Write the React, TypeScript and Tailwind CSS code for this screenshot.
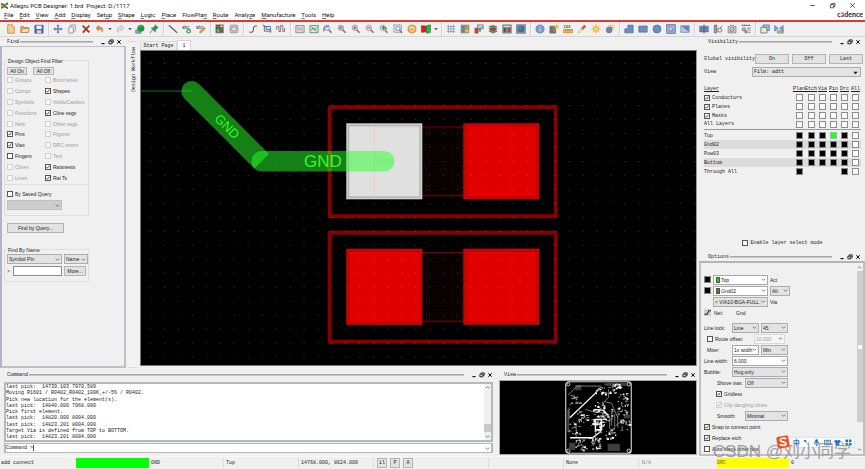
import React from 'react';

const SANS = "font-['Liberation_Sans',sans-serif] text-[5px] leading-[8px]";
const MONO = "font-['Liberation_Mono',monospace] text-[5px] leading-[6px]";

/* ---------- small shared controls ---------- */

function Chevron({ className = '' }: { className?: string }) {
  return (
    <svg viewBox="0 0 6 6" className={`pointer-events-none size-[5px] ${className}`} fill="none" stroke="#555" strokeWidth="0.9">
      <path d="M1 2l2 2 2-2" />
    </svg>
  );
}

function Check({ label, on = false, disabled = false, className = '', mono = false }: { label: string; on?: boolean; disabled?: boolean; className?: string; mono?: boolean }) {
  return (
    <label className={`flex items-center gap-[2px] whitespace-nowrap ${disabled ? 'text-[#9c9c9c]' : 'text-[#1c1c1c]'} ${mono ? MONO : ''} ${className}`}>
      <span className="grid size-[6px] shrink-0 place-items-center">
        <input
          type="checkbox"
          defaultChecked={on}
          disabled={disabled}
          className="col-start-1 row-start-1 size-[6px] appearance-none border border-[#555] bg-white disabled:border-[#d0d0d0] disabled:bg-[#f7f7f7]"
        />
        {on && (
          <svg viewBox="0 0 6 6" className="pointer-events-none col-start-1 row-start-1 size-[6px]" fill="none" stroke={disabled ? '#aaa' : '#222'} strokeWidth="0.8">
            <path d="M1.5 3l1 1.2 2-2.6" />
          </svg>
        )}
      </span>
      {label}
    </label>
  );
}

function Pick({ label, value, className = '', tone = 'bg-[#e3e3e3] border-[#adadad]', disabled = false, dark = false, swatch = '' }: { label: string; value: string; className?: string; tone?: string; disabled?: boolean; dark?: boolean; swatch?: string }) {
  return (
    <span className={`grid h-[10px] shrink-0 grid-cols-1 items-center border ${tone} ${className}`}>
      <select
        aria-label={label}
        disabled={disabled}
        className={`col-start-1 row-start-1 h-[8px] w-full min-w-0 appearance-none overflow-hidden bg-transparent p-0 pr-[5px] text-clip ${swatch ? 'pl-[7px]' : 'pl-[1px]'} ${disabled ? 'text-[#999]' : 'text-[#1c1c1c]'}`}
      >
        <option>{value}</option>
      </select>
      {swatch && <span className={`col-start-1 row-start-1 ml-[2px] h-[6px] w-[4px] border border-[#4a5a4a] ${swatch}`} />}
      {dark ? (
        <svg viewBox="0 0 6 6" className="pointer-events-none col-start-1 row-start-1 mr-[2px] size-[5px] justify-self-end">
          <path d="M0.5 2h5L3 5z" fill="#111" />
        </svg>
      ) : (
        <Chevron className="col-start-1 row-start-1 mr-[1px] justify-self-end" />
      )}
    </span>
  );
}

function Push({ children, className = 'h-[10px]' }: { children: React.ReactNode; className?: string }) {
  return (
    <button type="button" className={`flex shrink-0 items-center justify-center border border-[#b4b4b4] bg-[#e2e2e2] whitespace-nowrap text-[#1c1c1c] ${className}`}>
      {children}
    </button>
  );
}

function PanelHead({ title, className = '' }: { title: string; className?: string }) {
  return (
    <header className={`flex h-[9px] items-center ${MONO} ${className}`}>
      <h2>{title}</h2>
      <span className="mr-[7px] ml-[1px] h-[2px] flex-1 border-y border-t-[#a8a8a8] border-b-[#c4c4c4]" />
      <span className="flex gap-[2px]">
        <button type="button" aria-label={`Minimise ${title}`} className="size-[6px]">
          <svg viewBox="0 0 6 6" className="size-[6px]"><path d="M1.5 4.6h3" stroke="#111" strokeWidth="1.2" /></svg>
        </button>
        <button type="button" aria-label={`Float ${title}`} className="size-[6px]">
          <svg viewBox="0 0 6 6" className="size-[6px]" fill="none" stroke="#111" strokeWidth="0.9"><path d="M2.2 2V.9h3v2.4H4M.9 2.2h3v2.6h-3z" /></svg>
        </button>
        <button type="button" aria-label={`Close ${title}`} className="size-[6px]">
          <svg viewBox="0 0 6 6" className="size-[6px]" stroke="#111" strokeWidth="1"><path d="M1.3 1.2l3.4 3.6M4.7 1.2L1.3 4.8" /></svg>
        </button>
      </span>
    </header>
  );
}

/* ---------- toolbar ---------- */

const Lens = ({ inner }: { inner?: React.ReactNode }) => (
  <>
    <path d="M6.8 7l3.4 3.4" stroke="#9a6a3c" strokeWidth="1.8" />
    <circle cx="4.6" cy="4.6" r="3.2" fill="#dfe3ec" stroke="#8d93a3" strokeWidth="1" />
    {inner}
  </>
);

const ICONS: Record<string, React.ReactNode> = {
  New: (<><path d="M2 1h5.5L10 3.6V11H2z" fill="#f6cf85" stroke="#a77a30" strokeWidth=".8" /><path d="M7.5 1v2.6H10" fill="#fff3d6" stroke="#a77a30" strokeWidth=".6" /></>),
  Open: (<><path d="M1 3h3.5l1 1.2H10V10H1z" fill="#e9b765" stroke="#8f6a2d" strokeWidth=".7" /><path d="M1 10l2-4.4h8.4L9.8 10z" fill="#fbe1aa" stroke="#8f6a2d" strokeWidth=".7" /></>),
  Save: (<><path d="M1 1.5h10v9.5H1z" fill="#4c6ea6" stroke="#35507f" strokeWidth=".7" /><path d="M2.8 2h6.4v4H2.8z" fill="#eef3fb" /><path d="M3.4 7.6h5.2V11H3.4z" fill="#d4dcea" /></>),
  Move: (<path d="M6 .3L8 2.8H6.8v2.4h2.4V4L11.7 6 9.2 8V6.8H6.8v2.4H8L6 11.7 4 9.2h1.2V6.8H2.8V8L.3 6l2.5-2v1.2h2.4V2.8H4z" fill="#5c81a8" />),
  Copy: (<g fill="#f4f4f4" stroke="#868686" strokeWidth=".9"><path d="M4.5 1.2h5.4v7H4.5z" /><path d="M2.2 3.6h5.4v7.2H2.2z" /></g>),
  Delete: (<path d="M2 2l8 8M10 1.8L2.2 10.4" stroke="#9b3a14" strokeWidth="2.2" />),
  Undo: (<path d="M1.2 4.8L4.6 1.6v2c4 0 5.8 1.8 4 6.4-.2-3-1.4-3.6-4-3.6v2z" fill="#e5882d" stroke="#a95a12" strokeWidth=".4" />),
  Redo: (<path d="M10.8 4.8L7.4 1.6v2c-4 0-5.8 1.8-4 6.4.2-3 1.4-3.6 4-3.6v2z" fill="#e2e2e2" stroke="#a9a9a9" strokeWidth=".7" />),
  Status: (<><path d="M.8 7h6.5v4.2H.8z" fill="#9aa2ad" stroke="#5c6470" strokeWidth=".6" /><circle cx="7" cy="5" r="4.2" fill="#1f9440" /><path d="M4.4 4.2c1-2 3-2.4 4-1.7" stroke="#7fd690" strokeWidth=".9" fill="none" /></>),
  Pin: (<><path d="M1 11l3.6-4" stroke="#666" strokeWidth="1" /><path d="M7.4.8l3.8 3.8-1.3.3-2 2.2-.3 2.6L2.6 4.8l2.6-.4L7 2.3z" fill="#2f9440" stroke="#17662a" strokeWidth=".5" /></>),
  'Add Line': (<path d="M1 1.4l10 9" stroke="#4d5f86" strokeWidth="1.5" />),
  'Add Text': (<><text x="0" y="5.4" fontSize="5.6" fontFamily="Liberation Sans" fill="#333">abc</text><circle cx="8" cy="8.6" r="2.8" fill="#3fa048" /><path d="M6.4 8.6h3.2M8 7v3.2" stroke="#fff" strokeWidth=".9" /></>),
  'Edit Text': (<><text x="0" y="5.4" fontSize="5.6" fontFamily="Liberation Sans" fill="#333">abc</text><path d="M4.4 10.8l.6-2.4L9.6 4l1.8 1.6L6.8 10z" fill="#eaa653" stroke="#94601f" strokeWidth=".6" /></>),
  Place: (<><path d="M1 1h9v9.6H1z" fill="#3d6f49" stroke="#6b6b6b" strokeWidth=".7" /><path d="M2.4 2h2.4v2.2H2.4zM6.6 5h2.6v3H6.6z" fill="#e04040" /><path d="M2.2 6.2h3v3.6h-3z" fill="#4ad152" /><path d="M6.6 1.8h2.6v2H6.6z" fill="#e9e9e9" /></>),
  Component: (<><rect x="1.4" y="1.4" width="9.2" height="9.2" rx="1.2" fill="#c5c9d1" stroke="#868c97" strokeWidth=".9" /><path d="M3.6 4h4.8v4.2H3.6z" fill="#efefef" stroke="#b55" strokeWidth=".7" /></>),
  'Add Connect': (<><path d="M2.2 10h2.2c3 0 1-7.4 4-7.4h2" stroke="#333" strokeWidth="1.2" fill="none" /><circle cx="2.2" cy="10" r="1.3" fill="#e2b82b" /><circle cx="10" cy="2.6" r="1.3" fill="#e2b82b" /></>),
  Slide: (<path d="M.8 1.6h2v7h8.4M3 3h7v7.6M5 3v3.4h5" stroke="#5a6d9e" strokeWidth="1.2" fill="none" />),
  'Delay Tune': (<path d="M.8 7V3h2.8v6h2V1.6h2.6V9h2V5.6h1.2" stroke="#84706c" strokeWidth="1.1" fill="none" />),
  'Unrats All': (<><path d="M1 1.8h10v8.6H1z" fill="#d6d6da" stroke="#7c7c86" strokeWidth=".9" /><path d="M2.6 8L5 4.4l2 2.4 2.6-3M2.6 4l6.6 4.4" stroke="#c98080" strokeWidth=".7" fill="none" /></>),
  'Rats All': (<><path d="M1 1.8h10v8.6H1z" fill="#d9e8da" stroke="#597a60" strokeWidth=".9" /><path d="M2.6 8L5 4.4l2 2.4 2.6-3M2.6 4l6.6 4.4" stroke="#24944a" strokeWidth=".9" fill="none" /></>),
  'Zoom Points': <Lens inner={<path d="M1 9V5l6-3" stroke="#4778b8" strokeWidth="1.2" fill="none" />} />,
  'Zoom Fit': <Lens inner={<path d="M2.4 2.6h4.4v4H2.4z" fill="#c08f97" />} />,
  'Zoom In': <Lens inner={<path d="M2.8 4.6h3.6M4.6 2.8v3.6" stroke="#c63535" strokeWidth="1.1" />} />,
  'Zoom Out': <Lens inner={<path d="M2.8 4.6h3.6" stroke="#c63535" strokeWidth="1.1" />} />,
  'Zoom Previous': <Lens inner={<path d="M3 4.6L6 1.8v1.8c2.4 0 4 1 4.4 3.4C9 5.6 8 5.4 6 5.6v1.6z" fill="#239a3e" />} />,
  'Zoom Selection': (<><path d="M1 1h9v9H1z" fill="#d3dfe9" stroke="#5a7896" strokeWidth=".9" strokeDasharray="1.4 .7" /><circle cx="6" cy="5.4" r="2.4" fill="#f4f8fb" stroke="#5d7080" strokeWidth=".8" /><path d="M7.8 7.4l3 3.4" stroke="#8b6a49" strokeWidth="1.4" /></>),
  Refresh: (<><circle cx="6" cy="6" r="4.9" fill="#efa648" stroke="#b8792b" strokeWidth=".6" /><path d="M4 4.6a2.6 2.6 0 1 1-.2 2.8M3.6 3v2.2h2.2" stroke="#fff" strokeWidth="1" fill="none" /></>),
  'Flip Board': (<><path d="M.4 2.2h3.4a3.8 3.8 0 0 1 0 7.6H.4z" fill="#d52222" stroke="#8a1212" strokeWidth=".6" /><path d="M6.4 2l5-1v9.2l-5 1z" fill="#2bb53b" stroke="#186e24" strokeWidth=".6" /></>),
  Grid: (<path d="M1 3h10M1 6h10M1 9h10M3 1v10M6 1v10M9 1v10" stroke="#8196b8" strokeWidth=".9" />),
  Colors: (<><path d="M.8.8h10.4v10.4H.8z" fill="#8b929c" /><path d="M2 2h3.4v3.4H2z" fill="#5b7fb0" /><path d="M6.6 2H10v3.4H6.6z" fill="#e58b33" /><path d="M2 6.6h3.4V10H2z" fill="#4d9a58" /><path d="M6.6 6.6H10V10H6.6z" fill="#e7c436" /></>),
  Shadow: (<><path d="M4 1h7.2v5H4z" fill="#a7adb5" stroke="#666" strokeWidth=".6" /><path d="M1 5h4v6H1z" fill="#d94444" stroke="#555" strokeWidth=".6" /><path d="M5.4 5.4h3V9h-3z" fill="#3fae4b" /><path d="M5.4 3.6L9.6 2" stroke="#fff" strokeWidth=".9" /></>),
  Layers: (<g strokeWidth=".5" stroke="#4c4038"><path d="M1 8.6l5-2 5 2-5 2.4z" fill="#98815b" /><path d="M1 6l5-2 5 2-5 2.4z" fill="#c03a3a" /><path d="M1 3.4l5-2 5 2L6 5.8z" fill="#4a9c50" /></g>),
  'Cross Section': (<><path d="M.8 1h10.4v10H.8z" fill="#8b949f" stroke="#596067" strokeWidth=".6" /><path d="M2 4.6h3v5H2z" fill="#3d6c45" /><path d="M7 4.6h3v5H7z" fill="#c13a3a" /><path d="M2 2.2h8v1.2H2z" fill="#e6e6e6" /></>),
  'Canvas 3D': (<><path d="M.6.8h10.8v10.4H.6z" fill="#8d949c" stroke="#5f656b" strokeWidth=".6" /><circle cx="6" cy="6" r="4" fill="#2d6ca5" /><path d="M4 4c1-1.4 2-1 2.4 0S5 6 5 8C3.6 7 3 5.4 4 4zM7.4 5.4l2 .8-1 2z" fill="#52b15a" /></>),
  Info: (<><circle cx="6" cy="6" r="4.9" fill="#7b9cd0" stroke="#5673a3" strokeWidth=".7" /><path d="M6 5.2V9M6 2.8V4" stroke="#f3e37a" strokeWidth="1.3" /></>),
  Property: (<><path d="M1 2.6h7V11H1z" fill="#767d6f" stroke="#555" strokeWidth=".6" /><path d="M2.4 4.6h1.8V9H2.4z" fill="#d64848" /><path d="M5 4.6h1.8V9H5z" fill="#4fae56" /><circle cx="9.2" cy="3.2" r="2.4" fill="#efc13c" /></>),
  Measure: (<><text x=".6" y="5" fontSize="5" fontWeight="bold" fontFamily="Liberation Sans" fill="#444">123</text><path d="M.6 6.6h11v4H.6z" fill="#f0b54c" stroke="#ac7420" strokeWidth=".6" /><path d="M3 6.6v1.8M5.2 6.6v1.8M7.4 6.6v1.8M9.6 6.6v1.8" stroke="#7a5012" strokeWidth=".5" /></>),
  Highlight: (<><path d="M5 5.4L8.8 1.2l2 1.8-4 4z" fill="#c5593b" stroke="#7c3420" strokeWidth=".4" /><path d="M5 5.2l1.8 1.9C5 9.4 3 10.4 1 11c.6-2.4 2-4.4 4-5.8z" fill="#f6ec9b" stroke="#ac9b3c" strokeWidth=".4" /></>),
  Dehighlight: (<><path d="M6 .4v11.2M.4 6h11.2M2 2l8 8M10 2l-8 8" stroke="#eda92f" strokeWidth="1.2" /><circle cx="6" cy="6" r="2.9" fill="#fbdb5e" stroke="#d69426" strokeWidth=".7" /></>),
  'Assign Color': (<><path d="M7 .4v8M3 4.4h8.6M4 1.4l6 6M10 1.4l-6 6" stroke="#eda92f" strokeWidth="1.1" /><circle cx="7" cy="4.6" r="2.4" fill="#f6c94c" /><circle cx="5" cy="7.2" r="3.6" fill="#7386a9" stroke="#4d5d7c" strokeWidth=".5" /></>),
  'Shape Add': (<path d="M1 10.6V5.8h3.6V1.4H11v9.2z" fill="#6e8ec2" stroke="#4c679a" strokeWidth=".8" />),
  'Shape Rect': (<path d="M1 2.4h10v7.4H1z" fill="#6e8ec2" stroke="#4c679a" strokeWidth=".8" />),
  'Shape Circle': (<circle cx="6" cy="6" r="4.8" fill="#6e8ec2" stroke="#4c679a" strokeWidth=".8" />),
  'Shape Select': (<><path d="M.8.8h10.4v10.4H.8z" fill="#9fb6dc" stroke="#47619a" strokeWidth=".9" /><path d="M4 2.4v6.2l1.6-1.4 1 2.2 1-.5-1-2.1h2z" fill="#fff" stroke="#333" strokeWidth=".5" /></>),
  'Shape Void': (<><path d="M1 2h10v8H1z" fill="#b9c9e2" stroke="#5d78a8" strokeWidth=".8" /><path d="M1.6 2.6h9v6.8z" fill="#5f7fb6" /></>),
  'Flip Design': (<><path d="M.8 2.6h4.4v7H.8zM6.8 2.6h4.4v7H6.8z" fill="#6885b3" stroke="#48618c" strokeWidth=".6" /><path d="M6 .6v11" stroke="#222" strokeWidth=".9" /></>),
  Testprep: (<><path d="M1.6 1.4h3v9.2h-3z" fill="#9fa5ae" stroke="#555" strokeWidth=".8" /><circle cx="8.2" cy="7.4" r="2.4" fill="none" stroke="#666" strokeWidth="1" /><path d="M8.8 5L11 2" stroke="#666" strokeWidth="1" /></>),
  Artwork: (<><path d="M1.4 3h2l1-1.4h3.4l1 1.4h2v7.6H1.4z" fill="#c9c9c9" stroke="#757575" strokeWidth=".8" /><circle cx="6" cy="6.6" r="2.2" fill="#fff" stroke="#555" strokeWidth=".8" /><path d="M4 9l4-4.6" stroke="#666" strokeWidth=".7" /></>),
  Drill: (<><path d="M1 1.6h10" stroke="#555" strokeWidth="1.3" strokeDasharray="1.6 .6" /><circle cx="3.4" cy="6.4" r="2.2" fill="#aab4ba" stroke="#666" strokeWidth=".6" /><circle cx="6" cy="9.4" r="1.6" fill="#8fa58f" stroke="#555" strokeWidth=".5" /><path d="M7.4 5h3.8M8.6 7.4h2.6M8.6 10h2.6" stroke="#444" strokeWidth=".8" /></>),
  Report: (<><path d="M3.6 1.2h7.6v6.6H3.6z" fill="#a7bfe6" stroke="#4169a8" strokeWidth=".9" /><path d="M1 4h7.4v6.8H1z" fill="#f2e9b8" stroke="#4169a8" strokeWidth=".9" /></>),
  Compare: (<><path d="M.8 1.8l4.4 3.4L.8 8.6zM11 1.8L6.6 5.2 11 8.6z" fill="#86a4d1" stroke="#4e6c9c" strokeWidth=".7" /><path d="M4 8h7.2v3H4z" fill="#9cc08c" stroke="#5a7e4c" strokeWidth=".6" /></>),
};

const TOOL_GROUPS: string[][] = [
  ['New', 'Open', 'Save'],
  ['Move', 'Copy', 'Delete', 'Undo', 'v', 'Redo', 'v', 'Status', 'Pin'],
  ['Add Line', 'Add Text', 'Edit Text'],
  ['Place', 'Component'],
  ['Add Connect', 'Slide', 'Delay Tune'],
  ['Unrats All', 'Rats All', 'Zoom Points', 'Zoom Fit', 'Zoom In', 'Zoom Out', 'Zoom Previous', 'Zoom Selection', 'Refresh', 'Flip Board', 'v'],
  ['Grid', 'Colors', 'Shadow', 'Layers', 'Cross Section', 'Canvas 3D'],
  ['Info', 'Property', 'Measure', 'Highlight', 'Dehighlight', 'Assign Color'],
  ['Shape Add', 'Shape Rect', 'Shape Circle', 'Shape Select', 'Shape Void'],
  ['Flip Design', 'Testprep', 'Artwork', 'Drill'],
  ['Report', 'Compare'],
];

function Toolbar() {
  return (
    <div role="toolbar" aria-label="Main tools" className="flex h-[15px] shrink-0 items-center border-b border-[#d6d6d6] bg-[#f0f0f0] pl-[4px]">
      {TOOL_GROUPS.map((group, g) => (
        <React.Fragment key={g}>
          {g > 0 && <span className="flex h-[14px] w-[5px] justify-center"><span className="w-[2px] border-x border-l-[#d2d2d2] border-r-[#fafafa]" /></span>}
          {group.map((name, i) =>
            name === 'v' ? (
              <button key={i} type="button" aria-label={`${group[i - 1]} options`} className="flex h-[12px] w-[6px] items-center justify-center">
                <svg viewBox="0 0 6 6" className="size-[4px]"><path d="M.5 2h5L3 4.5z" fill="#222" /></svg>
              </button>
            ) : (
              <button key={i} type="button" aria-label={name} className="flex h-[12px] w-[14px] items-center justify-center">
                <svg viewBox="0 0 12 12" className="size-[10px]" fill="none">{ICONS[name]}</svg>
              </button>
            ),
          )}
        </React.Fragment>
      ))}
    </div>
  );
}

const MENUS: [string, string, string][] = [
  ['', 'F', 'ile'], ['', 'E', 'dit'], ['', 'V', 'iew'], ['', 'A', 'dd'], ['', 'D', 'isplay'], ['Set', 'u', 'p'], ['', 'S', 'hape'], ['', 'L', 'ogic'],
  ['', 'P', 'lace'], ['FlowPla', 'n', ''], ['', 'R', 'oute'], ['Analy', 'z', 'e'], ['', 'M', 'anufacture'], ['', 'T', 'ools'], ['', 'H', 'elp'],
];

function TitleAndMenu() {
  return (
    <div className="flex h-[20px] shrink-0 justify-between bg-white font-['Roboto',sans-serif] text-[#111]">
      <div className="flex flex-col">
        <h1 className="flex h-[11px] items-center gap-[2px] pl-[1px] text-[6px] leading-[8px] whitespace-pre">
          <svg viewBox="0 0 8 8" className="size-[7px]">
            <path d="M0 1l4 1.6L8 0v3L5 4.4 8 7v1L4 6 0 8V5l2.6-1L0 2.6z" fill="#2fa136" />
            <path d="M0 1l3 1.4v1L0 4zM5 4.6L8 6v2L4 6z" fill="#d22e25" />
          </svg>
          {'Allegro PCB Designer: 1.brd  Project: D:/1117'}
        </h1>
        <nav className="flex h-[8px] items-center gap-[6px] pl-[4px] text-[6px] leading-[8px]">
          {MENUS.map(([a, u, b]) => (
            <button key={a + u + b} type="button">{a}<span className="underline decoration-[#777]">{u}</span>{b}</button>
          ))}
        </nav>
      </div>
      <div className="flex flex-col items-end">
        <div className="flex h-[10px] items-center gap-[13px] pr-[9px]">
          <button type="button" aria-label="Minimise"><svg viewBox="0 0 8 8" className="size-[7px]"><path d="M1.5 4h5" stroke="#333" strokeWidth=".9" /></svg></button>
          <button type="button" aria-label="Restore"><svg viewBox="0 0 8 8" className="size-[7px]" fill="none" stroke="#333" strokeWidth=".9"><path d="M3 3V1.6h3.8V5H5.4M1.6 3h3.8v3.6H1.6z" /></svg></button>
          <button type="button" aria-label="Close"><svg viewBox="0 0 8 8" className="size-[7px]" stroke="#333" strokeWidth=".9"><path d="M1.4 1.4l5.2 5.2M6.6 1.4L1.4 6.6" /></svg></button>
        </div>
        <span className="pr-[2px] font-['Lato',sans-serif] text-[7px] leading-[8px] font-bold text-[#222]">c<span className="text-[#b03030]">ā</span>dence</span>
      </div>
    </div>
  );
}

/* ---------- find panel ---------- */

const FILTERS: [string, boolean, boolean][] = [
  ['Groups', false, true], ['Bond wires', false, true],
  ['Comps', false, true], ['Shapes', true, false],
  ['Symbols', false, true], ['Voids/Cavities', false, true],
  ['Functions', false, true], ['Cline segs', true, false],
  ['Nets', false, true], ['Other segs', false, true],
  ['Pins', true, false], ['Figures', false, true],
  ['Vias', true, false], ['DRC errors', false, true],
  ['Fingers', false, false], ['Text', false, true],
  ['Clines', false, true], ['Ratsnests', true, false],
  ['Lines', false, true], ['Rat Ts', true, false],
];

function FindPanel() {
  return (
    <section className="flex w-[126px] shrink-0 flex-col">
      <PanelHead title="Find" className="pr-[4px] pl-[7px]" />
      <div className={`flex flex-1 flex-col border-2 border-t border-[#bfbfc6] border-l-[#b3b3c6] px-[2px] pt-[13px] ${SANS}`}>
        <div className="flex h-[156px] w-[85px] flex-col border border-[#dedede]">
          <h3 className="-mt-[4px] mb-[2px] ml-[2px] flex h-[8px] w-fit items-center bg-[#f0f0f0] px-[1px]">Design Object Find Filter</h3>
          <div className="flex gap-[6px] pl-[2px]">
            <Push className="h-[8px] w-[20px]">All On</Push>
            <Push className="h-[8px] w-[21px]">All Off</Push>
          </div>
          <div className="grid h-[108px] grid-cols-[38px_1fr] grid-rows-10 pl-[2px]">
            {FILTERS.map(([name, on, off]) => <Check key={name} label={name} on={on} disabled={off} />)}
          </div>
          <div className="mt-[1px] flex flex-col gap-[2px] border-t border-[#dedede] pt-[5px] pl-[2px]">
            <Check label="By Saved Query" />
            <Pick label="Saved query" value="" disabled className="w-[55px]" tone="bg-[#cdcdcd] border-[#c0c0c0]" />
          </div>
        </div>
        <Push className="mt-[7px] ml-[3px] h-[10px] w-[57px]">Find by Query...</Push>
        <div className="mt-[16px] flex h-[33px] w-[85px] flex-col border border-[#dedede] pl-[2px]">
          <h3 className="-mt-[4px] flex h-[8px] w-fit items-center bg-[#f0f0f0] px-[1px]">Find By Name</h3>
          <div className="flex gap-[2px]">
            <Pick label="Object type" value="Symbol Pin" className="w-[55px]" />
            <Pick label="Match by" value="Name" className="w-[24px]" />
          </div>
          <div className="mt-[2px] flex items-center gap-[2px]">
            <span className="w-[4px]">&gt;</span>
            <input aria-label="Name to find" className="h-[10px] w-[49px] border border-[#8a8a8a] bg-white px-[1px]" />
            <Push className="h-[10px] w-[22px]">More...</Push>
          </div>
        </div>
      </div>
    </section>
  );
}

/* ---------- board canvas ---------- */

function RedPad({ x, y, seam }: { x: number; y: number; seam: number }) {
  return (
    <g>
      <rect x={x} y={y} width="76" height="76" fill="#d80000" />
      <rect x={x + 1.5} y={y + 1.5} width="73" height="73" fill="#b80000" />
      <rect x={x + 3} y={y + 3} width="70" height="70" fill="#e00000" />
      <path d={`M${x + 3} ${y + 3.5}H${x + seam}V${y + 72.5}H${x + 3}`} fill="none" stroke="#f40000" strokeWidth="0.7" />
    </g>
  );
}

function Board() {
  return (
    <svg viewBox="141 51 555 314" preserveAspectRatio="xMinYMin slice" className="h-full w-full bg-black" role="img" aria-label="Board layout">
      <defs>
        <pattern id="dots" x="150" y="63" width="13.95" height="13.98" patternUnits="userSpaceOnUse">
          <rect width="1.2" height="1" fill="#fff" fillOpacity="0.2" />
        </pattern>
        <pattern id="hatch" width="3" height="3" patternUnits="userSpaceOnUse">
          <rect width="1" height="1" fill="#2c0000" />
          <rect x="1.5" y="1.5" width="1" height="1" fill="#220000" />
        </pattern>
      </defs>
      {[107.3, 232.8].map((y) => (
        <g key={y}>
          <rect x="329.7" y={y} width="226" height="109" fill="none" stroke="#850000" strokeWidth="4" strokeLinejoin="round" />
          <rect x="422" y={y + 19.7} width="42" height="69" fill="url(#hatch)" />
          <path d={`M422 ${y + 19.7}h42M422 ${y + 88.5}h42`} stroke="#850000" strokeWidth="1" />
          <RedPad x={463.3} y={y + 16} seam={48} />
        </g>
      ))}
      <RedPad x={346.3} y={248.9} seam={28} />
      <rect x="346.3" y="123.3" width="76" height="76" fill="#d2d4d2" />
      <rect x="347.8" y="124.8" width="73" height="73" fill="#b4b6b4" />
      <rect x="349.3" y="126.3" width="70" height="70" fill="#e0e0e0" />
      <path d="M374.3 127v69M374 127.2h45" stroke="#f0c4c4" strokeWidth="0.7" />
      <rect x="141" y="51" width="555" height="314" fill="url(#dots)" />
      <path d="M141 91h51" stroke="#117011" strokeWidth="1.2" />
      <path d="M199 84L269 154L254.4 168.6L184.4 98.6A10.3 10.3 0 0 1 199 84z" fill="#2aff2a" fillOpacity="0.5" />
      <path d="M261.7 161.3H384.3" stroke="#2aff2a" strokeOpacity="0.5" strokeWidth="20.6" strokeLinecap="round" />
      <g fill="#2aff2a" fontFamily="Liberation Sans" textAnchor="middle">
        <text x="323" y="167" fontSize="17">GND</text>
        <text x="227.3" y="131" fontSize="13" transform="rotate(45 227.3 126.3)">GND</text>
        <text x="383" y="164.5" fontSize="9" fillOpacity="0.25">GND</text>
      </g>
    </svg>
  );
}

function Workspace() {
  return (
    <section className="flex min-w-0 flex-1 flex-col pr-[2px] pb-[2px]">
      <div className={`flex h-[13px] items-end ${MONO}`}>
        <button type="button" className="h-[9px] w-[37px] border border-b-0 border-[#dcdcdc] bg-[#ececec]">Start Page</button>
        <button type="button" className="h-[10px] w-[14px] border border-b-0 border-[#d4d4d4] bg-white">1</button>
      </div>
      <div className="min-h-0 flex-1 border border-t-[#777] border-r-[#9a9a9a] border-b-[#777] border-l-[#777]">
        <Board />
      </div>
    </section>
  );
}

/* ---------- command and view ---------- */

const LOG = [
  'last pick:  14739.103 7970.589',
  'Moving R1601 / R0402_R0402_100K_+/-5% / R0402.',
  'Pick new location for the element(s).',
  'last pick:  14840.000 7968.000',
  'Pick first element.',
  'last pick:  14820.000 8004.000',
  'last pick:  14823.201 8004.000',
  'Target Via is defined from TOP to BOTTOM.',
  'last pick:  14823.201 8004.000',
];

function CommandPanel() {
  return (
    <section className="flex w-[493px] shrink flex-col pl-[4px]">
      <PanelHead title="Command" className="mt-[2px] pl-[3px]" />
      <div className="mt-[3px] flex h-[60px] border-2 border-[#b5b9b9] bg-white">
        <div className={`flex flex-1 flex-col justify-between overflow-hidden whitespace-pre text-[#222] ${MONO}`}>
          {LOG.map((line, i) => <p key={i}>{line}</p>)}
        </div>
        <div className="flex w-[7px] flex-col items-center bg-[#f0f0f0] py-[1px]">
          <Chevron className="rotate-180" />
          <span className="mt-auto h-[8px] w-full bg-[#c8c8c8]" />
          <Chevron className="mt-[2px]" />
        </div>
      </div>
      <div className="mt-[1px] flex h-[10px] items-center border-2 border-y border-[#b5b9b9] bg-white">
        <label htmlFor="cmd" className={`w-[28px] overflow-hidden border-r border-[#555] whitespace-nowrap ${MONO}`}>Command &gt;</label>
        <input id="cmd" className={`h-[8px] min-w-0 flex-1 bg-transparent px-[2px] ${MONO}`} />
        <Chevron className="mr-[1px]" />
      </div>
    </section>
  );
}

/* Deterministic scatter of part outlines used to fill the overview board. */
const PARTS = Array.from({ length: 330 }, (_, i) => {
  const r = (n: number) => { const v = Math.sin(i * 12.9898 + n * 78.233) * 43758.5453; return v - Math.floor(v); };
  const clusters = [[10, 18], [17, 35], [31, 46], [33, 26], [56, 17], [57, 27], [58, 43], [44, 52], [29, 61], [15, 63], [9, 47], [41, 33], [48, 7], [35, 8], [33, 38]];
  const [cx, cy] = clusters[Math.floor(r(1) * clusters.length)];
  return { x: cx + (r(2) - 0.5) * 11, y: cy + (r(3) - 0.5) * 11, w: 0.6 + r(4) * 2, h: 0.5 + r(5) * 1.4, c: r(6) > 0.5 ? '#fff' : '#8f8f8f' };
});

function ViewPanel() {
  return (
    <section className="flex min-w-0 flex-1 flex-col pr-[2px] pl-[6px]">
      <PanelHead title="View" className="mt-[2px] pr-[1px] pl-[5px]" />
      <div className="mt-[1px] flex h-[75px] justify-center border border-[#a9a9a9] bg-black">
        <svg viewBox="0 0 66 72" className="h-[73px] w-[67px]" fill="none" role="img" aria-label="Board overview">
          <rect x=".7" y=".7" width="64.6" height="70.6" rx="3" stroke="#d5d5d5" strokeWidth="1.1" />
          {[[3.2, 3.2], [62.8, 3.2], [3.2, 68.8], [62.8, 68.8]].map(([x, y]) => <circle key={`${x}-${y}`} cx={x} cy={y} r="1.6" stroke="#fff" strokeWidth=".8" />)}
          <path d="M41 2h20v3H41zM58 33h6v4h-6zM4 61h6v7H4zM42 62h12v7H42zM10 4h6v5h-6z" fill="#3e3e3e" />
          <path d="M5 36L30 12l4-5M5 56h22l8-6v-10" stroke="#fff" strokeWidth="1.3" />
          <path d="M3 14l9-9h24M4 26v12M3 50V28M8 40l3 4v12M20 28l10 3h10l4 4v12M38 20l8 2 6 14M26 38h14M43 8v8l-4 4M14 60l8 8M50 44l8-6M46 30v14M49 32v14M52 34v12M30 48v12l-4 4" stroke="#a8a8a8" strokeWidth=".7" />
          {PARTS.map((p, i) => <rect key={i} x={p.x} y={p.y} width={p.w} height={p.h} fill={p.c} />)}
          <path d="M29 28l9 1 4 5M30 38v10h6V38zM50 8l4-3 2 2" stroke="#fff" strokeWidth="1.4" />
        </svg>
      </div>
    </section>
  );
}

/* ---------- visibility ---------- */

const COLS = ['Plan', 'Etch', 'Via', 'Pin', 'Drc', 'All'];
const TOGGLES = ['Conductors', 'Planes', 'Masks', 'All Layers'];
const LAYERS: [string, string][] = [['Top', 'kkkgkw'], ['Gnd02', 'kkkkkw'], ['Pow03', 'kkkkkw'], ['Bottom', 'kkkkkw'], ['Through All', 'k   kw']];
const CELL: Record<string, string> = { k: 'bg-black border-[#8c8c8c]', g: 'bg-[#22ff22] border-[#b0b0b0]', w: 'bg-white border-[#8c8c8c]' };

function Cell({ kind, label }: { kind: string; label: string }) {
  return (
    <td className="p-0 align-middle">
      {kind !== ' ' && <input type="checkbox" aria-label={label} className={`mx-auto block size-[7px] appearance-none border ${CELL[kind]}`} />}
    </td>
  );
}

function VisibilityPanel() {
  return (
    <section className={`flex h-[215px] shrink-0 flex-col ${MONO}`}>
      <PanelHead title="Visibility" className="pr-[4px] pl-[9px]" />
      <div className="flex flex-1 flex-col pr-[4px] pl-[5px]">
        <div className="mt-[8px] flex items-center justify-between">
          <span className="whitespace-nowrap">Global visibility</span>
          <div className="flex gap-[3px]">
            <Push className="h-[10px] w-[34px]">On</Push>
            <Push className="h-[10px] w-[34px]">Off</Push>
            <Push className="h-[10px] w-[34px]">Last</Push>
          </div>
        </div>
        <div className="mt-[3px] flex items-center justify-between">
          <span>View</span>
          <Pick label="View" value="Film: adtt" dark className="w-[109px]" />
        </div>
        <table className="mt-[8px] w-full table-fixed border-collapse">
          <colgroup>
            <col />
            {COLS.map((c, i) => <col key={c} className={i < 2 ? 'w-[12px]' : 'w-[11px]'} />)}
          </colgroup>
          <thead>
            <tr className="h-[8px]">
              <th className="p-0 text-left font-normal underline">Layer</th>
              {COLS.map((c) => <th key={c} className="p-0 text-center font-normal underline">{c}</th>)}
            </tr>
          </thead>
          <tbody>
            {TOGGLES.map((name, i) => (
              <tr key={name} className={`h-[9px] ${i === 3 ? 'border-b border-[#999]' : ''}`}>
                <th className="p-0 text-left font-normal">{i < 3 ? <Check label={name} on mono /> : name}</th>
                {COLS.map((c) => <Cell key={c} kind="w" label={`${name} ${c}`} />)}
              </tr>
            ))}
            <tr className="h-[2px]"><td colSpan={7} className="p-0" /></tr>
            {LAYERS.map(([name, cells], i) => (
              <tr key={name} className={`h-[9px] ${i % 2 ? 'bg-[#dcdcdc]' : ''}`}>
                <th className="p-0 text-left font-normal">{name}</th>
                {COLS.map((c, j) => <Cell key={c} kind={cells[j]} label={`${name} ${c}`} />)}
              </tr>
            ))}
          </tbody>
        </table>
        <Check label="Enable layer select mode" mono className="mt-auto mb-[6px] self-center" />
      </div>
    </section>
  );
}

/* ---------- options ---------- */

function Swatch() {
  return <span className="size-[7px] shrink-0 border-[1px] border-[#888] bg-black" />;
}

function Row({ children, className = '' }: { children: React.ReactNode; className?: string }) {
  return <div className={`flex h-[11px] shrink-0 items-center whitespace-nowrap ${className}`}>{children}</div>;
}

function OptionsPanel() {
  const white = 'bg-white border-[#a8a8a8]';
  return (
    <section className="flex min-h-0 flex-1 flex-col">
      <PanelHead title="Options" className="pr-[4px] pl-[9px]" />
      <div className="flex min-h-0 flex-1 overflow-hidden border-2 border-[#c0c0c0] border-t-[#b4b4b4]">
        <div className={`flex min-w-0 flex-1 flex-col overflow-hidden pt-[11px] pl-[3px] ${SANS}`}>
          <Row className="gap-[2px]"><Swatch /><Pick label="Active layer" value="Top" tone={white} swatch="bg-[#19d219]" className="w-[55px]" /><span>Act</span></Row>
          <Row className="gap-[2px]"><Swatch /><Pick label="Alternate layer" value="Gnd02" tone={white} swatch="bg-[#5c7a26]" className="w-[55px]" /><Pick label="Alternate mode" value="Alt" className="w-[20px]" /></Row>
          <Row className="gap-[2px] pl-[9px]"><Pick label="Via" value="< VIA10-BGA-FULL :" className="w-[55px]" /><span>Via</span></Row>
          <Row className="gap-[3px]">
            <svg viewBox="0 0 8 8" className="size-[7px]"><path d="M0 0h8v8H0z" fill="#cfcfcf" /><path d="M.5 6h3l2-4h2.5" stroke="#222" strokeWidth="1.2" fill="none" /></svg>
            <span className="w-[19px]">Net:</span><span>Gnd</span>
          </Row>
          <Row className="mt-[4px]"><span className="w-[28px]">Line lock:</span><Pick label="Line lock" value="Line" className="w-[27px]" /><Pick label="Corner" value="45" className="ml-[2px] w-[27px]" /></Row>
          <Row className="pl-[3px]"><Check label="Route offset:" className="w-[47px]" /><Pick label="Route offset value" value="10.000" disabled tone="bg-[#f5f5f5] border-[#dadada]" className="w-[31px]" /></Row>
          <Row><span className="w-[28px] pl-[3px]">Miter:</span><Pick label="Miter size" value="1x width" tone={white} className="w-[27px]" /><Pick label="Miter mode" value="Min" className="ml-[2px] w-[27px]" /></Row>
          <Row><span className="w-[28px]">Line width:</span><Pick label="Line width" value="6.000" tone={white} className="w-[56px]" /></Row>
          <Row><span className="w-[28px]">Bubble:</span><Pick label="Bubble" value="Hug only" className="w-[56px]" /></Row>
          <Row className="pl-[13px]"><span className="w-[28px]">Shove vias:</span><Pick label="Shove vias" value="Off" className="w-[43px]" /></Row>
          <Row className="pl-[12px]"><Check label="Gridless" on /></Row>
          <Row className="pl-[12px]"><Check label="Clip dangling clines" on disabled /></Row>
          <Row className="pl-[13px]"><span className="w-[28px]">Smooth:</span><Pick label="Smooth" value="Minimal" className="w-[43px]" /></Row>
          <Row><Check label="Snap to connect point" on /></Row>
          <Row><Check label="Replace etch" on /></Row>
          <Row><Check label="Auto-blank other rats" /></Row>
        </div>
        <div className="flex w-[7px] shrink-0 flex-col items-center bg-[#f0f0f0] py-[2px]">
          <Chevron className="rotate-180" />
          <span className="mt-[1px] flex h-[151px] w-[6px] items-center justify-center bg-[#cdcdcd]"><span className="size-[4px] bg-white" /></span>
          <Chevron className="mt-auto" />
        </div>
      </div>
    </section>
  );
}

/* ---------- status bar and floating pieces ---------- */

function StatusBar() {
  return (
    <footer className={`flex h-[13px] shrink-0 items-center border-t border-[#f8f8f8] bg-[#f0f0f0] ${MONO}`}>
      <span className="w-[76px] shrink-0 pl-[1px]">add connect</span>
      <span className="h-[10px] w-[73px] shrink-0 bg-[#00ff00]" />
      <span className="h-[10px] w-[75px] shrink-0 border-r border-[#dcdcdc] pt-[2px] pl-[2px]">GND</span>
      <span className="h-[10px] w-[75px] shrink-0 border-r border-[#dcdcdc] pt-[2px] pl-[2px]">Top</span>
      <span className="h-[10px] w-[75px] shrink-0 border-r border-[#dcdcdc] pt-[2px] pl-[2px]">14768.000, 8024.000</span>
      <span className="flex h-[10px] min-w-0 flex-1 items-center gap-[3px] border-r border-[#dcdcdc] pl-[3px]">
        <Push className="h-[10px] w-[10px]">il</Push>
        <Push className="h-[10px] w-[10px]">P</Push>
        <Push className="h-[10px] w-[10px]">A</Push>
      </span>
      <span className="h-[10px] w-[75px] shrink-0 border-r border-[#dcdcdc]" />
      <span className="h-[10px] w-[75px] shrink-0 border-r border-[#dcdcdc] pt-[2px] pl-[2px]">None</span>
      <span className="h-[10px] w-[78px] shrink-0 pt-[2px] pl-[3px] text-[#888]">N/A</span>
      <span className="h-[10px] w-[72px] shrink-0 bg-[#ffff00] pt-[2px] text-[#6b5a00]">DRC</span>
      <span className="w-[76px] shrink-0 pl-[2px]">0</span>
    </footer>
  );
}

function InputMethodBar() {
  return (
    <div className="absolute right-[10px] bottom-[20px] flex h-[14px] items-center">
      <svg viewBox="0 0 14 14" className="z-10 -mr-[2px] size-[14px]">
        <rect x="1" y="1" width="12" height="12" rx="2" fill="#f0501e" transform="rotate(-10 7 7)" />
        <path d="M10.3 3.6C7.6 2.7 4.3 3 4.2 5c-.1 2.2 6 1.5 5.9 3.7-.1 2-3.8 2.1-6.4.9" fill="none" stroke="#fff" strokeWidth="1.7" />
      </svg>
      <div className="flex h-[11px] w-[67px] items-center justify-around border border-[#d7e6f7] bg-white pl-[2px] text-[#1673d6]">
        <span className="font-['Noto_Sans_CJK_SC',sans-serif] text-[7px] leading-[9px] font-bold">中</span>
        <svg viewBox="0 0 8 8" className="size-[6px]" fill="currentColor"><path d="M1 1c3 0 4 1.5 3.6 4C3 5 1.500 4 1 1zM6 5.5l1.5.5L6 7.500z" /></svg>
        <svg viewBox="0 0 8 8" className="size-[7px]" fill="none" stroke="currentColor"><rect x="3" y=".5" width="2" height="4" rx="1" fill="currentColor" /><path d="M1.5 3.5c0 3.4 5 3.4 5 0M4 6v2" /></svg>
        <svg viewBox="0 0 8 8" className="size-[7px]" fill="none" stroke="currentColor"><path d="M.5 1.5h7v5h-7zM2 3.2h4M2 5h4" /></svg>
        <svg viewBox="0 0 8 8" className="size-[7px]" fill="currentColor"><path d="M2.5.8L4 2 5.5.8 8 2.4 7 4.2l-.8-.4v3.7H1.8V3.8l-.8.4L0 2.4z" /></svg>
        <svg viewBox="0 0 8 8" className="size-[7px]" fill="currentColor"><path d="M.5.5h3v3h-3zM4.5.5h3v3h-3zM.5 4.5h3v3h-3zM4.5 4.5h3v3h-3z" /></svg>
      </div>
    </div>
  );
}

export default function App() {
  return (
    <div className="relative flex h-screen min-h-[469px] flex-col overflow-hidden bg-[#f0f0f0] text-[#1c1c1c]">
      <TitleAndMenu />
      <div className="h-[2px] shrink-0 bg-[#d83a34]" />
      <Toolbar />
      <div className="flex min-h-0 flex-1">
        <div className="flex min-w-0 flex-1 flex-col">
          <div className="flex min-h-0 flex-1">
            <FindPanel />
            <div className="flex w-[14px] shrink-0 flex-col pt-[4px] pr-[3px] pl-[2px]">
              <button type="button" className={`flex flex-1 rotate-180 items-end justify-end border-x border-b border-[#dadada] bg-[#f2f2f2] pb-[5px] whitespace-nowrap [writing-mode:vertical-rl] ${MONO}`}>Design Workflow</button>
            </div>
            <Workspace />
          </div>
          <div className="flex h-[88px] shrink-0">
            <CommandPanel />
            <ViewPanel />
          </div>
        </div>
        <aside className="flex w-[166px] shrink-0 flex-col">
          <VisibilityPanel />
          <OptionsPanel />
        </aside>
      </div>
      <StatusBar />
      <InputMethodBar />
      <p className="absolute right-[14px] bottom-[5px] font-['Liberation_Sans','Noto_Sans_CJK_SC',sans-serif] text-[17px] leading-[24px] whitespace-nowrap text-[#8a8a8a]/80">CSDN @刘小同学</p>
    </div>
  );
}
